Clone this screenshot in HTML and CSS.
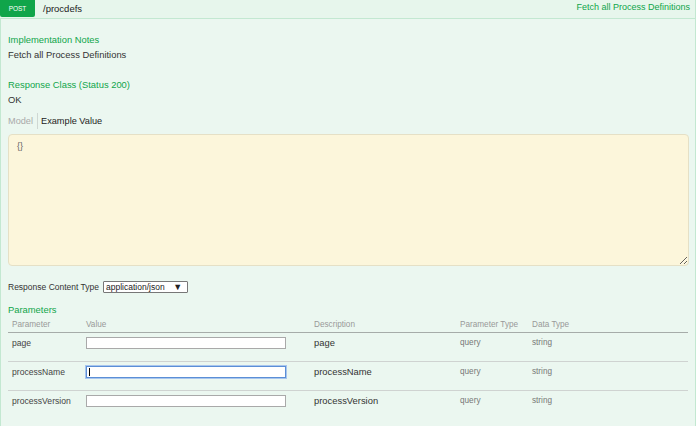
FILE: index.html
```html
<!DOCTYPE html>
<html lang="en">
<head>
<meta charset="utf-8">
<title>POST /procdefs</title>
<link rel="stylesheet" href="styles.css">
</head>
<body>
<div class="op">
  <div class="heading">
    <span class="method">POST</span>
    <span class="path">/procdefs</span>
    <span class="summary">Fetch all Process Definitions</span>
  </div>
  <div class="content">
    <h4 class="title notes-title">Implementation Notes</h4>
    <p class="text">Fetch all Process Definitions</p>
    <h4 class="title class-title">Response Class (Status 200)</h4>
    <p class="text">OK</p>
    <div class="tabs">
      <span class="tab tab-model">Model</span>
      <span class="tab tab-example">Example Value</span>
    </div>
    <textarea class="example" readonly>{}</textarea>
    <div class="ctype">
      <span class="ctype-label">Response Content Type</span>
      <span class="select"><span class="select-text">application/json</span><span class="select-arrow">▼</span></span>
    </div>
    <h4 class="title params-title">Parameters</h4>
    <table class="params">
      <colgroup>
        <col class="c1"><col class="c2"><col class="c3"><col class="c4"><col class="c5">
      </colgroup>
      <thead>
        <tr><th>Parameter</th><th>Value</th><th>Description</th><th>Parameter Type</th><th>Data Type</th></tr>
      </thead>
      <tbody>
        <tr>
          <td class="pname">page</td>
          <td><div class="field"></div></td>
          <td class="desc">page</td>
          <td class="small">query</td>
          <td class="small">string</td>
        </tr>
        <tr>
          <td class="pname">processName</td>
          <td><div class="field focused"><span class="caret"></span></div></td>
          <td class="desc">processName</td>
          <td class="small">query</td>
          <td class="small">string</td>
        </tr>
        <tr class="last">
          <td class="pname">processVersion</td>
          <td><div class="field"></div></td>
          <td class="desc">processVersion</td>
          <td class="small">query</td>
          <td class="small">string</td>
        </tr>
      </tbody>
    </table>
  </div>
</div>
</body>
</html>
```
FILE: styles.css
```css
html, body {
  margin: 0;
  padding: 0;
  background: #ffffff;
}
body {
  font-family: "Liberation Sans", Arial, sans-serif;
  color: #333;
}
.op {
  width: 696px;
  height: 426px;
  display: flex;
  flex-direction: column;
}
.heading {
  display: flex;
  align-items: flex-start;
  height: 18px;
  background: #e7f6ec;
  border-bottom: 1px solid #c3e8d1;
  border-right: 1px solid #c3e8d1;
}
.method {
  width: 35px;
  height: 17px;
  line-height: 17px;
  background: #10a54a;
  color: #fff;
  font-size: 6.5px;
  text-align: center;
  border-radius: 0 0 2px 2px;
}
.path {
  margin-left: 8px;
  font-size: 9.5px;
  line-height: 17px;
  color: #222;
}
.summary {
  margin-left: auto;
  padding-right: 5px;
  font-size: 9px;
  line-height: 15px;
  color: #10a54a;
}
.content {
  flex: 1;
  background: #ebf7f0;
  border-left: 1px solid #c3e8d1;
  border-right: 1px solid #c3e8d1;
  padding: 0 6px 0 7px;
  display: flex;
  flex-direction: column;
}
.title {
  margin: 0;
  font-weight: normal;
  font-size: 9.4px;
  line-height: 12px;
  color: #10a54a;
}
.notes-title { margin-top: 15px; }
.class-title { margin-top: 18px; }
.params-title { margin-top: 11px; }
.text {
  margin: 3px 0 0;
  font-size: 9.4px;
  line-height: 12px;
  color: #333;
}
.tabs {
  margin-top: 7px;
  display: flex;
  height: 16px;
  align-items: center;
}
.tab {
  font-size: 9.2px;
  line-height: 16px;
}
.tab-model {
  color: #aaa;
  padding-right: 4px;
}
.tab-example {
  color: #222;
  border-left: 1px solid #cfd8d3;
  padding-left: 3px;
}
.example {
  display: block;
  margin: 5px 0 0;
  width: 681px;
  height: 132px;
  box-sizing: border-box;
  background: #fcf6db;
  border: 1px solid #e5e0c6;
  border-radius: 4px;
  padding: 5px 8px;
  font-family: "Liberation Sans", Arial, sans-serif;
  font-size: 9px;
  line-height: 12px;
  color: #666;
  resize: vertical;
  outline: none;
}
.ctype {
  margin-top: 15px;
  display: flex;
  align-items: center;
  height: 12px;
}
.ctype-label {
  font-size: 8.5px;
  color: #333;
  margin-right: 4px;
}
.select {
  display: flex;
  align-items: center;
  width: 85px;
  height: 12px;
  box-sizing: border-box;
  border: 1px solid #777;
  border-radius: 1px;
  background: #fff;
  padding: 0 2px;
}
.select-text {
  font-size: 8.5px;
  line-height: 10px;
  color: #222;
}
.select-arrow {
  margin-left: auto;
  margin-right: 3px;
  font-size: 9px;
  line-height: 10px;
  color: #222;
}
.params {
  width: 680px;
  border-collapse: collapse;
  table-layout: fixed;
}
.c1 { width: 74px; }
.c2 { width: 228px; }
.c3 { width: 146px; }
.c4 { width: 72px; }
.c5 { width: 160px; }
.params th {
  text-align: left;
  font-weight: normal;
  font-size: 8.2px;
  line-height: 10px;
  color: #999;
  padding: 4px 4px 2px;
  border-bottom: 1px solid #a6aca9;
}
.params td {
  vertical-align: top;
  padding: 4px 4px 12px;
  height: 12px;
  line-height: 12px;
  border-bottom: 1px solid #cfd3d1;
}
.params tr.last td {
  border-bottom: none;
}
.pname {
  font-size: 8.6px;
  color: #444;
}
.desc {
  font-size: 9.4px;
  color: #333;
}
.small {
  font-size: 8.2px;
  color: #777;
}
.field {
  width: 200px;
  height: 12px;
  box-sizing: border-box;
  border: 1px solid #a9a9a9;
  background: #fff;
  display: flex;
  align-items: center;
  padding-left: 2px;
}
.field.focused {
  border-color: #5b8fd6;
  box-shadow: 0 0 0 1px #a8c5ee;
}
.caret {
  width: 1px;
  height: 8px;
  background: #000;
}
```
